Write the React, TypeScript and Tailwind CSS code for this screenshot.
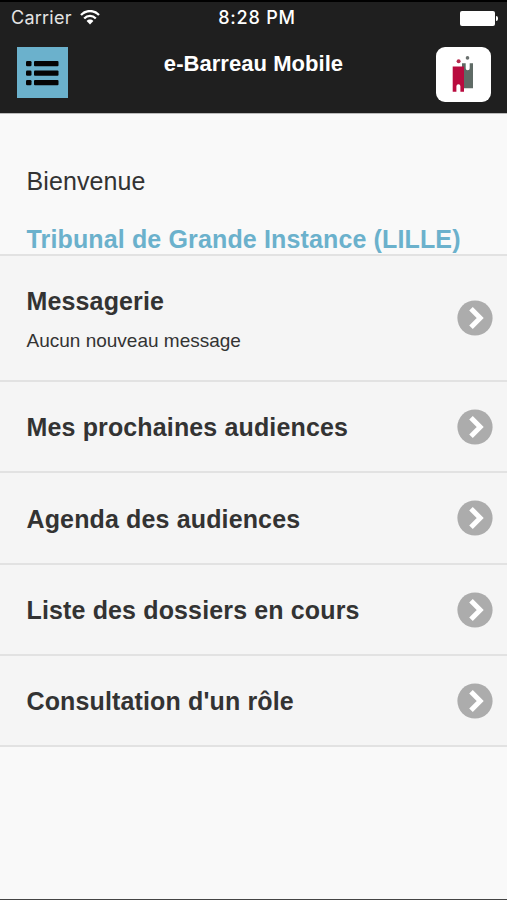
import React from "react";

const rows = [
  { title: "Messagerie", note: "Aucun nouveau message", h: "h-[126px]", pad: "pt-0.5" },
  { title: "Mes prochaines audiences", h: "h-[91px]", pad: "pt-0" },
  { title: "Agenda des audiences", h: "h-[92px]", pad: "pt-0.5" },
  { title: "Liste des dossiers en cours", h: "h-[91px]", pad: "pt-0" },
  { title: "Consultation d'un rôle", h: "h-[91px]", pad: "pt-0" },
];

function Wifi() {
  return (
    <svg width="20" height="16" viewBox="0 0 20 16" fill="none" stroke="#fff" strokeWidth="2.3">
      <path d="M1 5C6 -.3 14 -.3 19 5" />
      <path d="M4.2 8.5C7.5 5.1 12.5 5.1 15.8 8.5" />
      <path d="M6.6 11C8.5 9.1 11.5 9.1 13.4 11L10 14.5Z" fill="#fff" stroke="none" />
    </svg>
  );
}

function MenuIcon() {
  return (
    <svg width="51" height="51" viewBox="0 0 51 51" fill="#050505">
      {[14, 23.5, 33].map((y) => (
        <g key={y}>
          <rect x="9" y={y} width="5.5" height="5.2" rx="1.3" />
          <rect x="17" y={y} width="24.5" height="5.2" rx="1" />
        </g>
      ))}
    </svg>
  );
}

function Logo() {
  return (
    <svg width="55" height="55" viewBox="0 -0.7 55 55">
      <path fill="#5f6b66" d="M26 15.5h3.7v5a2 2 0 0 0 4 0v-5H37v25H26z" />
      <circle cx="31.5" cy="10.2" r="1.8" fill="#6b716f" />
      <path fill="#b90b3f" d="M16.7 18.7H28V44h-3.6v-5.5a2 2 0 0 0-4 0V44h-3.7z" />
      <circle cx="22.6" cy="13.5" r="2" fill="#b72a4e" />
    </svg>
  );
}

function Arrow() {
  return (
    <svg className="shrink-0" width="36" height="36" viewBox="0 0 36 36">
      <circle cx="18" cy="18" r="17.6" fill="#acacac" />
      <path d="M14 8.7L23.2 18L14 27.3" fill="none" stroke="#fff" strokeWidth="5" />
    </svg>
  );
}

export default function App() {
  return (
    <div className="flex h-[900px] w-[507px] flex-col overflow-hidden border-b border-[#444] bg-[#f9f9f9] font-['Liberation_Sans',Arial,sans-serif] text-[#333]">
      <header className="h-[114px] shrink-0 border-t-2 border-b border-t-black border-b-[#bbb] bg-[#1f1f1f] text-white">
        <div className="grid h-8 grid-cols-3 items-center pr-[9px] pl-[11px] font-[Inter,sans-serif]">
          <div className="flex items-center gap-[8px]">
            <span className="text-[18px] leading-8 tracking-[0.25px] text-[#e4e4e4]">Carrier</span>
            <Wifi />
          </div>
          <span className="pl-[5px] text-center text-[18px] leading-8 font-medium tracking-[0.8px] whitespace-nowrap">8:28 PM</span>
          <div className="flex items-center justify-end gap-px">
            <span className="h-[15px] w-[35px] rounded-[2px] bg-white" />
            <span className="h-[5px] w-[2px] rounded-r-full bg-white" />
          </div>
        </div>
        <div className="flex items-start justify-between pr-4 pl-[17px]">
          <div className="mt-[13px] h-[51px] w-[51px] bg-[#6bb1cc]">
            <MenuIcon />
          </div>
          <h1 className="mt-[15px] pl-[3px] text-[22px] leading-[30px] font-bold tracking-[0.05px]">e-Barreau Mobile</h1>
          <div className="mt-[13px] h-[55px] w-[55px] rounded-[9px] bg-white">
            <Logo />
          </div>
        </div>
      </header>
      <section className="h-[140px] shrink-0 pt-[52px] pl-[26.5px]">
        <p className="text-[25px] leading-[30px] tracking-[0.1px]">Bienvenue</p>
        <h2 className="mt-7 text-[25px] leading-[30px] font-bold tracking-[0.14px] whitespace-nowrap text-[#6bb1cc]">Tribunal de Grande Instance (LILLE)</h2>
      </section>
      <ul className="border-b-2 border-[#e2e2e2] bg-[#f5f5f5]">
        {rows.map((r) => (
          <li key={r.title} className={`${r.h} flex items-center justify-between border-t-2 border-[#e2e2e2] pr-[14px] pl-[26.5px]`}>
            <div className={r.pad}>
              <h3 className="text-[25px] leading-[30px] font-bold tracking-[0.14px]">{r.title}</h3>
              {r.note && <p className="mt-[14px] text-[19px] leading-[22px]">{r.note}</p>}
            </div>
            <Arrow />
          </li>
        ))}
      </ul>
    </div>
  );
}
